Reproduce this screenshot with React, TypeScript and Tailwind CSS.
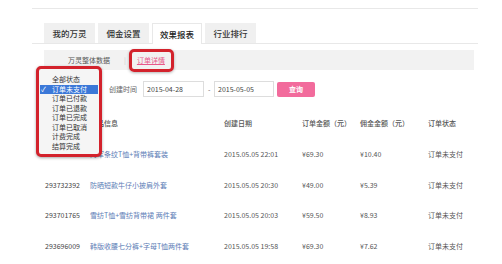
import React from 'react';

const tabs = [
  { label: '我的万灵', active: false },
  { label: '佣金设置', active: false },
  { label: '效果报表', active: true },
  { label: '行业排行', active: false },
];

const statuses = ['全部状态', '订单未支付', '订单已付款', '订单已退款', '订单已完成', '订单已取消', '计费完成', '结算完成'];

const rows = [
  { id: '293745118', name: '海军条纹T恤+背带裤套装', date: '2015.05.05 22:01', amount: '¥69.30', fee: '¥10.40' },
  { id: '293732392', name: '防晒短款牛仔小披肩外套', date: '2015.05.05 20:30', amount: '¥49.00', fee: '¥5.39' },
  { id: '293701765', name: '雪纺T恤+雪纺背带裙 两件套', date: '2015.05.05 20:03', amount: '¥59.50', fee: '¥8.93' },
  { id: '293696009', name: '韩版收腰七分裤+字母T恤两件套', date: '2015.05.05 19:58', amount: '¥69.30', fee: '¥7.62' },
];

const cols = 'grid grid-cols-[45px_134px_78px_58px_68px_1fr] items-center';

export default function App() {
  return (
    <div className="relative w-[502px] h-[264px] overflow-hidden bg-white font-['Noto_Sans_CJK_SC',sans-serif] text-[#444]">
      <div className="ml-[32px] w-[446px] h-[9px] border-b border-[#e8e8e8]" />

      {/* top tabs */}
      <div className="ml-[32px] mt-[14px] w-[446px] h-[21px] pl-[12px] flex gap-[3px] border-b border-[#e8e8e8]">
        {tabs.map((t) => (
          <div
            key={t.label}
            className={
              t.active
                ? 'w-[50px] h-[21px] flex items-center justify-center bg-white border border-b-0 border-[#e8e8e8] text-[8.5px] font-medium text-[#222]'
                : 'w-[51px] h-[20px] flex items-center justify-center bg-[#f0f0f0] text-[8.5px] font-medium text-[#333]'
            }
          >
            {t.label}
          </div>
        ))}
      </div>

      {/* sub bar */}
      <div className="ml-[44px] mt-[6px] w-[430px] h-[20px] bg-[#f2f2f2] flex items-center pl-[24px] text-[7px]">
        <span className="text-[#555]">万灵整体数据</span>
        <span className="ml-[14px] text-[#ccc]">|</span>
        <span className="ml-[11px] text-[#e8588a] underline">订单详情</span>
      </div>

      {/* filters */}
      <div className="mt-[11px] ml-[45px] h-[16px] flex items-center text-[7px]">
        <div className="w-[55px] h-[16px] border border-[#ddd]" />
        <span className="ml-[9px] text-[#666]">创建时间</span>
        <div className="ml-[6px] w-[61px] h-[16px] border border-[#ddd] flex items-center pl-[3px] text-[#444]">2015-04-28</div>
        <span className="ml-[4px] w-[6px] text-[#666]">-</span>
        <div className="w-[60px] h-[16px] border border-[#ddd] flex items-center pl-[3px] text-[#444]">2015-05-05</div>
        <div className="ml-[3px] w-[38px] h-[15px] rounded-[2px] bg-[#f26b9c] text-white font-semibold flex items-center justify-center">查询</div>
      </div>

      {/* table */}
      <div className="mt-[11px] ml-[45px] text-[7px]">
        <div className={`${cols} h-[31px] text-[#555] font-medium`}>
          <span>订单编号</span>
          <span>商品信息</span>
          <span>创建日期</span>
          <span>订单金额（元）</span>
          <span>佣金金额（元）</span>
          <span>订单状态</span>
        </div>
        {rows.map((r) => (
          <div key={r.id} className={`${cols} h-[30.5px]`}>
            <span className="text-[#444]">{r.id}</span>
            <span className="text-[#5d7db6]">{r.name}</span>
            <span className="text-[#555]">{r.date}</span>
            <span className="text-[#555]">{r.amount}</span>
            <span className="text-[#555]">{r.fee}</span>
            <span className="text-[#555]">订单未支付</span>
          </div>
        ))}
      </div>

      {/* open status select menu, highlighted */}
      <div className="absolute left-[36px] top-[66px] w-[66px] h-[91px] border-[3px] border-[#d3222c] rounded-[5px] bg-[#f5f5f5] shadow-[0_1px_3px_rgba(0,0,0,0.35)] pt-[6px] px-[1px] text-[7px] leading-none text-[#333]">
        {statuses.map((s, i) => (
          <div
            key={s}
            className={
              i === 1
                ? 'h-[9.5px] flex items-center bg-[#3b78d8] text-white'
                : 'h-[9.5px] flex items-center'
            }
          >
            <span className="w-[12px] pl-[1px]">{i === 1 ? '✓' : ''}</span>
            {s}
          </div>
        ))}
      </div>

      {/* highlight on order-detail tab */}
      <div className="absolute left-[129px] top-[49px] w-[45px] h-[23px] border-[3px] border-[#d3222c] rounded-[5px] shadow-[0_1px_3px_rgba(0,0,0,0.3)]" />
    </div>
  );
}
